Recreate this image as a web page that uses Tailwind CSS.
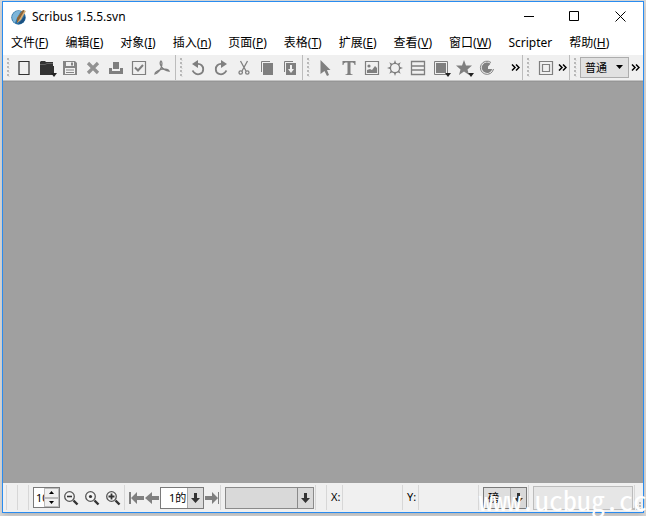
<!DOCTYPE html>
<html lang="zh-CN">
<head>
<meta charset="utf-8">
<title>Scribus 1.5.5.svn</title>
<script src="https://cdn.jsdelivr.net/npm/@tailwindcss/browser@4"></script>
</head>
<body class="h-screen overflow-hidden bg-[#d6d6d6] pt-px pr-0.5 pb-[3px] pl-0.5 font-['Noto_Sans','Noto_Sans_CJK_SC',sans-serif] text-xs text-black">
<svg class="hidden" aria-hidden="true">
  <symbol id="grip" viewBox="0 0 3 20"><path d="M0 0h2v2H0zM0 4h2v2H0zM0 8h2v2H0zM0 12h2v2H0zM0 16h2v2H0z" fill="#b8b8b8"/><path d="M1 2h2v1H1zM1 6h2v1H1zM1 10h2v1H1zM1 14h2v1H1zM1 18h2v1H1z" fill="#e0e0e0"/></symbol>
  <symbol id="more" viewBox="0 0 9 7"><path d="M1 .5l3 3-3 3M5 .5l3 3-3 3" fill="none" stroke="#000" stroke-width="1.500"/></symbol>
  <symbol id="down" viewBox="0 0 9 12"><path d="M3 1h3v5h3L4.500 11 0 6h3z" fill="#333"/></symbol>
  <symbol id="lens" viewBox="0 0 16 16"><circle cx="6.500" cy="6.500" r="4.800" fill="#f4f4f4" stroke="#555" stroke-width="1.300"/><path d="M10.500 10.500L14.500 14.500" stroke="#333" stroke-width="2.400"/></symbol>
</svg>
<div class="flex h-full flex-col border border-[#2a8cf0] bg-[#f0f0f0] shadow-md">
  <header class="flex h-[29px] items-center bg-white pl-2">
    <svg class="size-4" viewBox="0 0 16 16"><circle cx="7.500" cy="8.500" r="7.200" fill="#2a6fa3"/><path d="M1.500 6C3 2 7 1 10 2L6 9 4 14C1 12 .8 8 1.500 6z" fill="#7db5d8"/><path d="M8 14l6-7c1 4-2 8-6 8z" fill="#1b5080"/><path d="M12 1l3 1-5 9-4 3 0-5z" fill="#d9b077"/><path d="M12 1l1.500.5L8 11l-2 3 0-5z" fill="#8a6338"/></svg>
    <h1 class="ml-[5px] flex-1 text-xs">Scribus 1.5.5.svn</h1>
    <button aria-label="最小化" class="flex h-7 w-[46px] items-center justify-center"><svg class="size-[11px]" viewBox="0 0 11 11"><path d="M0 5.500h10" stroke="#000"/></svg></button>
    <button aria-label="最大化" class="flex h-7 w-[45px] items-center justify-center"><svg class="size-[11px]" viewBox="0 0 11 11"><path d="M.5.5h9v9h-9z" fill="none" stroke="#000"/></svg></button>
    <button aria-label="关闭" class="flex h-7 w-[46px] items-center justify-center"><svg class="size-[11px]" viewBox="0 0 11 11"><path d="M.5.5l10 10M10.500.5l-10 10" stroke="#000"/></svg></button>
  </header>
  <nav class="flex h-6 items-center gap-[17px] bg-white pl-2 whitespace-nowrap" aria-label="菜单">
    <button>文件(<u>F</u>)</button><button>编辑(<u>E</u>)</button><button>对象(<u>I</u>)</button><button>插入(<u>n</u>)</button><button>页面(<u>P</u>)</button><button>表格(<u>T</u>)</button><button>扩展(<u>E</u>)</button><button>查看(<u>V</u>)</button><button>窗口(<u>W</u>)</button><button>Scripter</button><button>帮助(<u>H</u>)</button>
  </nav>
  <div class="flex h-[26px] items-stretch border-b border-[#c4c4c4] text-[#7f7f7f]">
    <div class="flex items-center border-r border-[#bcbcbc] pr-0.5 pl-1">
      <svg class="mr-0.5 h-5 w-[3px]"><use href="#grip"/></svg>
      <button aria-label="新建" class="flex h-6 w-[23px] items-center justify-center"><svg class="size-4" viewBox="0 0 16 16"><path d="M3 1.500h10v13H3z" fill="none" stroke="#333" stroke-width="1.200"/></svg></button>
      <button aria-label="打开" class="flex h-6 w-[23px] items-center justify-center"><svg class="size-5" viewBox="0 0 20 20"><path d="M3 4l1-1h4l1 1h7v4h1v9H3z" fill="#333"/><path d="M3 6.500h5l2-1h6" fill="none" stroke="#777" stroke-width=".7"/><path d="M14 15h6l-3 4z" fill="#222"/></svg></button>
      <button aria-label="保存" class="flex h-6 w-[23px] items-center justify-center"><svg class="size-4" viewBox="0 0 16 16"><path d="M1 1h12l2 2v12H1z" fill="#858585"/><path d="M4 2h8v4H4zM3 8h10v6H3z" fill="#f0f0f0"/><path d="M9 2.500h2v3H9zM4 9.500h8v1H4zM4 12h8v1H4z" fill="#858585"/></svg></button>
      <button aria-label="关闭文档" class="flex h-6 w-[23px] items-center justify-center"><svg class="size-4" viewBox="0 0 16 16"><path d="M3 3l10 10M13 3L3 13" stroke="#929292" stroke-width="3.200"/></svg></button>
      <button aria-label="打印" class="flex h-6 w-[23px] items-center justify-center"><svg class="size-4" viewBox="0 0 16 16"><path d="M1 8h3v3h8V8h3v6H1zM5 2h6v7H5z" fill="currentColor"/></svg></button>
      <button aria-label="检查" class="flex h-6 w-[23px] items-center justify-center"><svg class="size-4" viewBox="0 0 16 16"><path d="M1.500 1.500h13v13h-13z" fill="none" stroke="currentColor" stroke-width="1.200"/><path d="M4 7.500l3 3L12 5" fill="none" stroke="currentColor" stroke-width="2"/></svg></button>
      <button aria-label="导出为 PDF" class="flex h-6 w-[23px] items-center justify-center"><svg class="size-4" viewBox="0 0 16 16"><path d="M7 1c1.500 1 1 4 0 7-1 2-3 5-6 6 0-3 4-4 7-5 3 0 6 0 7 2-3 0-6-2-8-5-1-2-1-4 0-5z" fill="none" stroke="currentColor" stroke-width="1.300"/></svg></button>
    </div>
    <div class="flex items-center border-r border-[#bcbcbc] pr-px pl-1">
      <svg class="mr-[3px] h-5 w-[3px]"><use href="#grip"/></svg>
      <button aria-label="撤销" class="flex h-6 w-[23px] items-center justify-center"><svg class="size-4" viewBox="0 0 16 16"><path d="M7 4c4-.5 6.200 2 6.200 5.200 0 5-5.700 6.500-9 3.500L2.500 10.500" fill="none" stroke="currentColor" stroke-width="1.800"/><path d="M8 0v8L2 4z" fill="currentColor"/></svg></button>
      <button aria-label="重做" class="flex h-6 w-[23px] items-center justify-center"><svg class="size-4" viewBox="0 0 16 16"><path d="M9 4c-4-.5-6.200 2-6.200 5.200 0 5 5.700 6.500 9 3.500l1.700-2.200" fill="none" stroke="currentColor" stroke-width="1.800"/><path d="M8 0v8l6-4z" fill="currentColor"/></svg></button>
      <button aria-label="剪切" class="flex h-6 w-[23px] items-center justify-center"><svg class="size-4" viewBox="0 0 16 16"><path d="M4.500 1l5.500 10M11.500 1L6 11" stroke="currentColor" stroke-width="1.300"/><circle cx="4.700" cy="12.500" r="1.700" fill="none" stroke="currentColor" stroke-width="1.300"/><circle cx="11.300" cy="12.500" r="1.700" fill="none" stroke="currentColor" stroke-width="1.300"/></svg></button>
      <button aria-label="复制" class="flex h-6 w-[23px] items-center justify-center"><svg class="size-4" viewBox="0 0 16 16"><path d="M2.500 12V1.500H11" fill="none" stroke="currentColor"/><path d="M4 3h10v12H4z" fill="currentColor"/></svg></button>
      <button aria-label="粘贴" class="flex h-6 w-[23px] items-center justify-center"><svg class="size-4" viewBox="0 0 16 16"><path d="M2.500 12V1.500H11" fill="none" stroke="currentColor"/><path d="M4 3h10v12H4z" fill="currentColor"/><path d="M8 5h2v4h2l-3 4-3-4h2z" fill="#f0f0f0"/></svg></button>
    </div>
    <div class="flex flex-1 items-center border-r border-[#bcbcbc] pl-1">
      <svg class="mr-1 h-5 w-[3px]"><use href="#grip"/></svg>
      <button aria-label="选择" class="flex h-6 w-[23px] items-center justify-center"><svg class="size-4" viewBox="0 0 16 16"><path d="M2.500 0l10 10H9l2 5-2 1-2.500-5-4 3z" fill="currentColor"/></svg></button>
      <button aria-label="文本框" class="flex h-6 w-[23px] items-center justify-center"><svg class="size-4" viewBox="0 0 16 16"><path d="M1.500 1h13v4h-1c0-2-1-2.500-4-2.500V13c0 1 .5 1.200 2 1.200v.8h-7v-.8c1.500 0 2-.2 2-1.200V2.500c-3 0-4 .5-4 2.500h-1z" fill="currentColor"/></svg></button>
      <button aria-label="图像框" class="flex h-6 w-[23px] items-center justify-center"><svg class="size-4" viewBox="0 0 16 16"><path d="M1.500 1.500h13v13h-13z" fill="none" stroke="currentColor" stroke-width="1.200"/><circle cx="5" cy="6" r="1.600" fill="currentColor"/><path d="M3 13V10l3-1 2 1 3-4 2 2v5z" fill="currentColor"/></svg></button>
      <button aria-label="渲染框" class="flex h-6 w-[23px] items-center justify-center"><svg class="size-4" viewBox="0 0 16 16"><circle cx="8" cy="8" r="4.600" fill="none" stroke="currentColor" stroke-width="1.300"/><path d="M8 0l1.300 3.500H6.700zM8 16l1.300-3.500H6.700zM0 8l3.500-1.300v2.600zM16 8l-3.500-1.300v2.600zM2.300 2.300l3.400 1.600-1.800 1.800zM13.700 2.300l-3.400 1.600 1.800 1.800zM2.300 13.700l3.400-1.600-1.800-1.800zM13.700 13.700l-3.400-1.600 1.800-1.800z" fill="currentColor"/></svg></button>
      <button aria-label="表格" class="flex h-6 w-[23px] items-center justify-center"><svg class="size-4" viewBox="0 0 16 16"><path d="M1.500 1.500h13v13h-13zM2 6h12M2 10h12" fill="none" stroke="currentColor" stroke-width="1.300"/></svg></button>
      <button aria-label="形状" class="flex h-6 w-[23px] items-center justify-center"><svg class="size-5" viewBox="0 0 20 20"><path d="M3.500 3.500h13v13h-13z" fill="none" stroke="currentColor"/><path d="M5 5h10v10H5z" fill="currentColor"/><path d="M14 15h6l-3 4z" fill="#222"/></svg></button>
      <button aria-label="多边形" class="flex h-6 w-[23px] items-center justify-center"><svg class="size-5" viewBox="0 0 20 20"><path d="M10 2l2 5.500h6l-4.500 4L15 17l-5-3.500L5 17l1.500-5.500-4.500-4h6z" fill="currentColor"/><path d="M14 15h6l-3 4z" fill="#222"/></svg></button>
      <button aria-label="弧形" class="flex h-6 w-[23px] items-center justify-center"><svg class="size-4" viewBox="0 0 16 16"><path d="M12 2.500A6.600 6.600 0 1 0 14.500 9" fill="none" stroke="currentColor"/><path d="M11.500 3.700A5.300 5.300 0 1 0 13.200 9H9V6.500z" fill="currentColor"/></svg></button>
      <button aria-label="更多工具" class="mr-0.5 ml-auto flex h-6 w-[9px] items-center"><svg class="h-[7px] w-[9px]"><use href="#more"/></svg></button>
    </div>
    <div class="flex items-center border-r border-[#bcbcbc] pl-1">
      <svg class="mr-1 h-5 w-[3px]"><use href="#grip"/></svg>
      <button aria-label="PDF 按钮" class="flex h-6 w-[23px] items-center justify-center"><svg class="size-4" viewBox="0 0 16 16"><path d="M1.500 1.500h13v13h-13zM4.500 4.500h7v7h-7z" fill="none" stroke="currentColor" stroke-width="1.200"/></svg></button>
      <button aria-label="更多 PDF 工具" class="mr-0.5 ml-px flex h-6 w-[9px] items-center"><svg class="h-[7px] w-[9px]"><use href="#more"/></svg></button>
    </div>
    <div class="flex items-center pl-1">
      <svg class="mr-[3px] h-5 w-[3px]"><use href="#grip"/></svg>
      <div class="relative h-[21px] w-[49px]">
        <select aria-label="预览质量" class="h-[21px] w-full appearance-none border border-[#adadad] bg-[#e1e1e1] pl-1 text-[11px] leading-[19px] text-black"><option>普通</option></select>
        <svg class="pointer-events-none absolute top-2 right-1.5 h-1 w-[7px]" viewBox="0 0 7 4"><path d="M0 0h7L3.500 4z"/></svg>
      </div>
      <button aria-label="更多视图选项" class="mr-[3px] ml-0.5 flex h-6 w-[9px] items-center"><svg class="h-[7px] w-[9px]"><use href="#more"/></svg></button>
    </div>
  </div>
  <main class="flex-1 border-t border-[#969696] bg-[#a0a0a0]"></main>
  <footer class="relative flex h-[29px] items-center text-[11px]">
    <i class="ml-[3px] h-[25px] w-px bg-[#d7d7d7]"></i>
    <i class="ml-2.5 h-[25px] w-px bg-[#d7d7d7]"></i>
    <i class="ml-2.5 h-[25px] w-px bg-[#d7d7d7]"></i>
    <div class="ml-1 flex h-[21px] w-[27px] border border-[#7a7a7a] bg-white">
      <input aria-label="缩放" value="100%" class="w-2.5 min-w-0 pl-0.5 leading-[19px] outline-none">
      <div class="flex flex-1 flex-col">
        <button aria-label="放大一级" class="flex flex-1 items-center justify-center border border-[#bbb] bg-[#f0f0f0]"><svg class="h-[3px] w-[5px]" viewBox="0 0 5 3"><path d="M0 3h5L2.500 0z"/></svg></button>
        <button aria-label="缩小一级" class="flex flex-1 items-center justify-center border border-[#bbb] bg-[#f0f0f0]"><svg class="h-[3px] w-[5px]" viewBox="0 0 5 3"><path d="M0 0h5L2.500 3z"/></svg></button>
      </div>
    </div>
    <div class="ml-[3px] flex gap-[5px]">
      <button aria-label="缩小"><svg class="size-4" viewBox="0 0 16 16"><use href="#lens"/><path d="M4 6.500h5" stroke="#333" stroke-width="1.600"/></svg></button>
      <button aria-label="实际大小"><svg class="size-4" viewBox="0 0 16 16"><use href="#lens"/><circle cx="6.500" cy="6.500" r="1.600" fill="#333"/></svg></button>
      <button aria-label="放大"><svg class="size-4" viewBox="0 0 16 16"><use href="#lens"/><path d="M3.500 6.500h6M6.500 3.500v6" stroke="#333" stroke-width="1.800"/></svg></button>
    </div>
    <i class="ml-[3px] h-[25px] w-px bg-[#d7d7d7]"></i>
    <button aria-label="首页" class="ml-1"><svg class="h-3 w-4" viewBox="0 0 16 12"><path d="M0 0h2v12H0zM2 6l6-6v4h7v4H8v4z" fill="#7f7f7f"/></svg></button>
    <button aria-label="上一页"><svg class="h-3 w-[15px]" viewBox="0 0 15 12"><path d="M0 6l7-6v4h7v4H7v4z" fill="#7f7f7f"/></svg></button>
    <div class="relative h-[22px] w-11">
      <select aria-label="页码" class="h-[22px] w-full appearance-none border border-[#7a7a7a] bg-white pl-2 text-[11px] leading-5 text-black"><option>1的</option></select>
      <span class="pointer-events-none absolute inset-y-px right-px flex w-4 items-center justify-center border-l border-[#aaa] bg-[#dcdcdc]"><svg class="h-3 w-[9px]"><use href="#down"/></svg></span>
    </div>
    <button aria-label="下一页或末页"><svg class="h-3 w-4" viewBox="0 0 16 12"><path d="M14 0h1v12h-1zM14 6L8 0v4H1v4h7v4z" fill="#7f7f7f"/></svg></button>
    <i class="h-[25px] w-px bg-[#d7d7d7]"></i>
    <div class="relative ml-1 h-[22px] w-[89px]">
      <select aria-label="图层" class="h-[22px] w-full appearance-none border border-[#8a8a8a] bg-[#d9d9d9]"><option></option></select>
      <span class="pointer-events-none absolute inset-y-px right-px flex w-4 items-center justify-center border-l border-[#8a8a8a] bg-[#d9d9d9]"><svg class="h-3 w-[9px]"><use href="#down"/></svg></span>
    </div>
    <i class="ml-px h-[25px] w-px bg-[#d7d7d7]"></i>
    <i class="ml-2.5 h-[25px] w-px bg-[#d7d7d7]"></i>
    <span class="w-[15px] pl-1">X:</span>
    <i class="h-[25px] w-px bg-[#d7d7d7]"></i>
    <i class="ml-[59px] h-[25px] w-px bg-[#d7d7d7]"></i>
    <span class="w-[15px] pl-1">Y:</span>
    <i class="h-[25px] w-px bg-[#d7d7d7]"></i>
    <i class="ml-[59px] h-[25px] w-px bg-[#d7d7d7]"></i>
    <div class="relative ml-1 h-[22px] w-11">
      <select aria-label="单位" class="h-[22px] w-full appearance-none border border-[#7a7a7a] bg-[#dedede] pl-1 text-[11px] leading-5 text-black"><option>磅</option></select>
      <span class="pointer-events-none absolute inset-y-px right-px flex w-4 items-center justify-center border-l border-[#aaa] bg-[#d9d9d9]"><svg class="h-3 w-[9px]"><use href="#down"/></svg></span>
    </div>
    <i class="ml-px h-[25px] w-px bg-[#d7d7d7]"></i>
    <div role="progressbar" aria-label="进度" class="ml-1 h-6 flex-1 border border-[#bcbcbc] bg-[#e6e6e6]"></div>
    <i class="mr-2 ml-px h-[25px] w-px bg-[#d7d7d7]"></i>
    <svg class="absolute right-0.5 bottom-0.5 size-2" viewBox="0 0 8 8"><path d="M6 0h2v2H6zM3 3h2v2H3zM6 3h2v2H6zM0 6h2v2H0zM3 6h2v2H3zM6 6h2v2H6z" fill="#bcbcbc"/></svg>
    <p class="pointer-events-none absolute top-0.5 -right-1 font-['Noto_Sans_Mono_CJK_SC','Liberation_Mono',monospace] text-[28px] leading-7 whitespace-nowrap text-white">www.ucbug.cc</p>
  </footer>
</div>
</body>
</html>
